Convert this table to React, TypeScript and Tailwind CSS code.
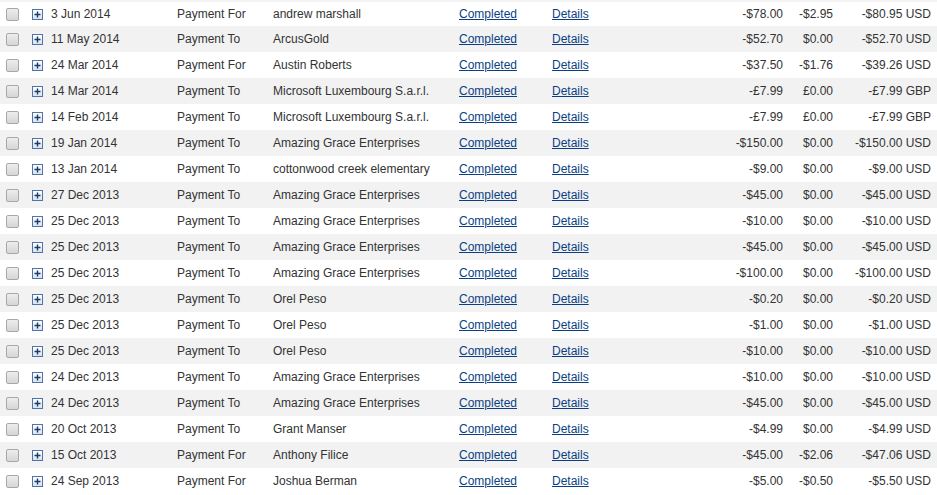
import React from 'react';

type Row = {
  date: string;
  kind: string;
  name: string;
  amount: string;
  fee: string;
  total: string;
};

const AGE = 'Amazing Grace Enterprises';

const rows: Row[] = [
  { date: '3 Jun 2014', kind: 'Payment For', name: 'andrew marshall', amount: '-$78.00', fee: '-$2.95', total: '-$80.95 USD' },
  { date: '11 May 2014', kind: 'Payment To', name: 'ArcusGold', amount: '-$52.70', fee: '$0.00', total: '-$52.70 USD' },
  { date: '24 Mar 2014', kind: 'Payment For', name: 'Austin Roberts', amount: '-$37.50', fee: '-$1.76', total: '-$39.26 USD' },
  { date: '14 Mar 2014', kind: 'Payment To', name: 'Microsoft Luxembourg S.a.r.l.', amount: '-£7.99', fee: '£0.00', total: '-£7.99 GBP' },
  { date: '14 Feb 2014', kind: 'Payment To', name: 'Microsoft Luxembourg S.a.r.l.', amount: '-£7.99', fee: '£0.00', total: '-£7.99 GBP' },
  { date: '19 Jan 2014', kind: 'Payment To', name: AGE, amount: '-$150.00', fee: '$0.00', total: '-$150.00 USD' },
  { date: '13 Jan 2014', kind: 'Payment To', name: 'cottonwood creek elementary', amount: '-$9.00', fee: '$0.00', total: '-$9.00 USD' },
  { date: '27 Dec 2013', kind: 'Payment To', name: AGE, amount: '-$45.00', fee: '$0.00', total: '-$45.00 USD' },
  { date: '25 Dec 2013', kind: 'Payment To', name: AGE, amount: '-$10.00', fee: '$0.00', total: '-$10.00 USD' },
  { date: '25 Dec 2013', kind: 'Payment To', name: AGE, amount: '-$45.00', fee: '$0.00', total: '-$45.00 USD' },
  { date: '25 Dec 2013', kind: 'Payment To', name: AGE, amount: '-$100.00', fee: '$0.00', total: '-$100.00 USD' },
  { date: '25 Dec 2013', kind: 'Payment To', name: 'Orel Peso', amount: '-$0.20', fee: '$0.00', total: '-$0.20 USD' },
  { date: '25 Dec 2013', kind: 'Payment To', name: 'Orel Peso', amount: '-$1.00', fee: '$0.00', total: '-$1.00 USD' },
  { date: '25 Dec 2013', kind: 'Payment To', name: 'Orel Peso', amount: '-$10.00', fee: '$0.00', total: '-$10.00 USD' },
  { date: '24 Dec 2013', kind: 'Payment To', name: AGE, amount: '-$10.00', fee: '$0.00', total: '-$10.00 USD' },
  { date: '24 Dec 2013', kind: 'Payment To', name: AGE, amount: '-$45.00', fee: '$0.00', total: '-$45.00 USD' },
  { date: '20 Oct 2013', kind: 'Payment To', name: 'Grant Manser', amount: '-$4.99', fee: '$0.00', total: '-$4.99 USD' },
  { date: '15 Oct 2013', kind: 'Payment For', name: 'Anthony Filice', amount: '-$45.00', fee: '-$2.06', total: '-$47.06 USD' },
  { date: '24 Sep 2013', kind: 'Payment For', name: 'Joshua Berman', amount: '-$5.00', fee: '-$0.50', total: '-$5.50 USD' },
];

function Checkbox() {
  return (
    <span className="block w-[13px] h-[13px] rounded-[2px] border border-[#a8a8a8] bg-gradient-to-b from-[#ededed] to-[#d6d6d6]" />
  );
}

function Expand() {
  return (
    <span className="flex items-center justify-center w-[11px] h-[11px] border border-[#4f74a6] bg-gradient-to-b from-white to-[#d9e3ef]">
      <svg width="7" height="7" viewBox="0 0 7 7">
        <path d="M3.5 0.5v6M0.5 3.5h6" stroke="#1b3a66" strokeWidth="1.4" />
      </svg>
    </span>
  );
}

export default function App() {
  return (
    <div className="w-[937px] h-[495px] overflow-hidden bg-white text-[12px] text-[#333] font-['Liberation_Sans',Arial,sans-serif]">
      <div className="h-[2px] bg-[#f4f4f4]" />
      {rows.map((r, i) => (
        <div
          key={i}
          className={`grid grid-cols-[32px_19px_126px_96px_186px_93px_148px_83px_50px_98px] items-center ${
            i === 0 ? 'h-[24px]' : 'h-[26px]'
          } ${i % 2 === 1 ? 'bg-[#f2f2f2]' : 'bg-white'}`}
        >
          <div className="pl-[6px]">
            <Checkbox />
          </div>
          <div>
            <Expand />
          </div>
          <div>{r.date}</div>
          <div>{r.kind}</div>
          <div className="whitespace-nowrap">{r.name}</div>
          <div>
            <a href="#" className="text-[#0a3f86] underline">Completed</a>
          </div>
          <div>
            <a href="#" className="text-[#0a3f86] underline">Details</a>
          </div>
          <div className="text-right">{r.amount}</div>
          <div className="text-right">{r.fee}</div>
          <div className="text-right whitespace-nowrap">{r.total}</div>
        </div>
      ))}
    </div>
  );
}
